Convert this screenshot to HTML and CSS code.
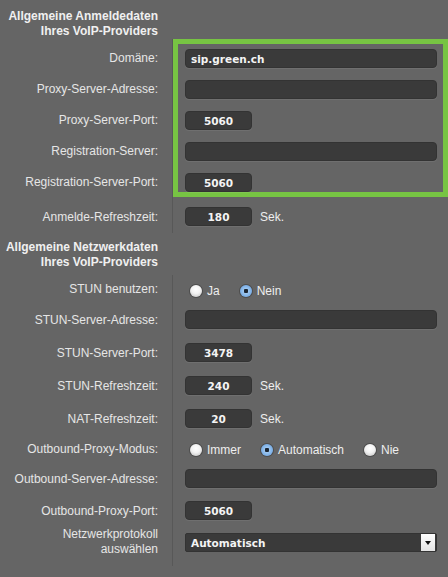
FILE: index.html
```html
<!DOCTYPE html>
<html>
    <head>
        <meta charset="UTF-8" />
        <meta name="viewport" content="width=device-width" />
        <title>VoIP-Provider</title>
        <link rel="stylesheet" href="styles.css">
    </head>
    <body>
        <form class="sheet">
            <div class="head">Allgemeine Anmeldedaten<br>Ihres VoIP-Providers</div>

            <div class="row group">
                <div class="labels">
                    <label>Domäne:</label>
                    <label>Proxy-Server-Adresse:</label>
                    <label>Proxy-Server-Port:</label>
                    <label>Registration-Server:</label>
                    <label>Registration-Server-Port:</label>
                </div>
                <div class="value">
                    <div class="highlight">
                        <input type="text" class="wide" value="sip.green.ch" />
                        <input type="text" class="wide" value="" />
                        <input type="text" class="port" value="5060" />
                        <input type="text" class="wide" value="" />
                        <input type="text" class="port" value="5060" />
                    </div>
                </div>
            </div>

            <div class="row">
                <label>Anmelde-Refreshzeit:</label>
                <div class="value"><input type="text" class="port" value="180" /><span class="unit">Sek.</span></div>
            </div>

            <div class="head second">Allgemeine Netzwerkdaten<br>Ihres VoIP-Providers</div>

            <div class="row opts first">
                <label>STUN benutzen:</label>
                <div class="value">
                    <label class="opt"><input type="radio" name="stun" />Ja</label>
                    <label class="opt"><input type="radio" name="stun" checked />Nein</label>
                </div>
            </div>
            <div class="row">
                <label>STUN-Server-Adresse:</label>
                <div class="value"><input type="text" class="wide" value="" /></div>
            </div>
            <div class="row">
                <label>STUN-Server-Port:</label>
                <div class="value"><input type="text" class="port" value="3478" /></div>
            </div>
            <div class="row">
                <label>STUN-Refreshzeit:</label>
                <div class="value"><input type="text" class="port" value="240" /><span class="unit">Sek.</span></div>
            </div>
            <div class="row">
                <label>NAT-Refreshzeit:</label>
                <div class="value"><input type="text" class="port" value="20" /><span class="unit">Sek.</span></div>
            </div>
            <div class="row opts">
                <label>Outbound-Proxy-Modus:</label>
                <div class="value">
                    <label class="opt"><input type="radio" name="outbound" />Immer</label>
                    <label class="opt"><input type="radio" name="outbound" checked />Automatisch</label>
                    <label class="opt"><input type="radio" name="outbound" />Nie</label>
                </div>
            </div>
            <div class="row narrow">
                <label>Outbound-Server-Adresse:</label>
                <div class="value"><input type="text" class="wide" value="" /></div>
            </div>
            <div class="row">
                <label>Outbound-Proxy-Port:</label>
                <div class="value"><input type="text" class="port" value="5060" /></div>
            </div>
            <div class="row multi">
                <label>Netzwerkprotokoll<br>auswählen</label>
                <div class="value">
                    <div class="select"><span>Automatisch</span><span class="arrow"></span></div>
                </div>
            </div>
        </form>
    </body>
</html>
```

FILE: styles.css
```css
body {
    margin: 0;
    background-color: #656565;
    font-family: "Liberation Sans", Arial, sans-serif;
    font-size: 12px;
    color: #e6e6e6;
}

.sheet {
    width: 448px;
}

.head {
    width: 158px;
    padding: 9px 0 0 0;
    text-align: right;
    font-weight: bold;
    line-height: 15px;
    color: #f0f0f0;
}

.head.second {
    padding: 7px 0 5px 0;
}

.row {
    display: grid;
    grid-template-columns: 172px 1fr;
}

.row > label {
    display: flex;
    align-items: center;
    justify-content: flex-end;
    padding-right: 14px;
    text-align: right;
}

.value {
    display: flex;
    align-items: center;
    border-left: 1px #585858 solid;
    padding: 7px 0 7px 12px;
}

/* first block: labels beside the green frame */
.labels {
    display: flex;
    flex-direction: column;
    align-items: flex-end;
    gap: 12px;
    padding: 10px 14px 0 0;
}

.labels label {
    line-height: 19px;
}

.group .value {
    padding: 0 0 3px 0;
    align-items: flex-start;
}

.highlight {
    display: flex;
    flex-direction: column;
    gap: 12px;
    width: 258px;
    padding: 5px 0 0 7px;
    border: 5px #77c443 solid;
}

input[type=text] {
    box-sizing: border-box;
    height: 19px;
    margin: 0;
    padding: 0 5px;
    background-color: #3a3a3a;
    border: 1px #333333 solid;
    border-radius: 4px;
    box-shadow: 0 1px 0 rgba(255, 255, 255, 0.07);
    font-family: "DejaVu Sans", sans-serif;
    font-weight: bold;
    font-size: 10.5px;
    color: #f4f4f4;
    outline: none;
}

.wide {
    width: 252px;
}

.port {
    width: 67px;
    text-align: center;
}

.unit {
    margin-left: 8px;
    color: #eeeeee;
}

.opts .value {
    padding: 9px 0 7px 17px;
    gap: 20px;
}

.opts.first .value {
    padding-top: 10px;
    padding-bottom: 6px;
}

.opt {
    display: flex;
    align-items: center;
    line-height: 12px;
    color: #eeeeee;
}

input[type=radio] {
    appearance: none;
    -webkit-appearance: none;
    width: 12px;
    height: 12px;
    margin: 0 5px 0 0;
    border-radius: 50%;
    background: radial-gradient(circle at 50% 35%, #ffffff 0%, #f2f2f2 45%, #bdbdbd 100%);
    box-shadow: 0 0 0 1px rgba(0, 0, 0, 0.25);
}

input[type=radio]:checked {
    background: radial-gradient(circle, #1b2633 0, #1b2633 2px, #9cc6f0 2.5px, #5c98dc 100%);
}

.narrow .value {
    padding: 6px 0 6px 12px;
}

.multi > label {
    align-items: flex-start;
    line-height: 15px;
}

.multi .value {
    padding: 6px 0 14px 12px;
}

.select {
    box-sizing: border-box;
    display: flex;
    align-items: center;
    justify-content: space-between;
    width: 252px;
    height: 19px;
    padding-left: 5px;
    background-color: #3a3a3a;
    border: 1px #333333 solid;
    border-radius: 2px;
    font-family: "DejaVu Sans", sans-serif;
    font-weight: bold;
    font-size: 10.5px;
    color: #f4f4f4;
}

.arrow {
    display: flex;
    align-items: center;
    justify-content: center;
    width: 14px;
    height: 17px;
    margin-right: 1px;
    background: linear-gradient(#ffffff, #e4e4e4);
}

.arrow::after {
    content: "";
    border-left: 3px transparent solid;
    border-right: 3px transparent solid;
    border-top: 4px #111111 solid;
}
```
